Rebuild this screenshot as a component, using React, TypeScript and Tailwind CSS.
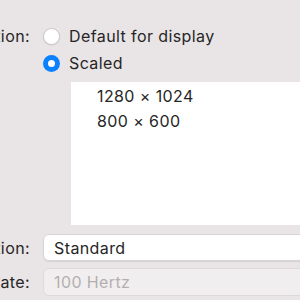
import React from "react";

function Label({ children, className = "" }: { children: React.ReactNode; className?: string }) {
  return (
    <div className={"flex justify-end items-center whitespace-nowrap " + className}>
      <span>{children}</span>
    </div>
  );
}

function Radio({ checked }: { checked: boolean }) {
  return checked ? (
    <div className="w-[17px] h-[17px] rounded-full bg-[#0a82ff] flex items-center justify-center shrink-0">
      <div className="w-[7px] h-[7px] rounded-full bg-white" />
    </div>
  ) : (
    <div className="w-[17px] h-[17px] rounded-full bg-white border border-[#cdc8c9] shadow-[0_0.5px_1px_rgba(0,0,0,0.12)] shrink-0" />
  );
}

export default function App() {
  return (
    <div
      className="w-[300px] h-[300px] overflow-hidden bg-[#e9e4e5] text-[16px] tracking-[0.4px] text-[#262626]"
      style={{ fontFamily: 'Inter, "Noto Sans", "Liberation Sans", sans-serif' }}
    >
      <div className="grid grid-cols-[30px_1fr] gap-x-[13px] pt-[26px] mr-[-30px]">
        <Label className="h-[20px]">Resolution:</Label>
        <div className="flex flex-col">
          <div className="flex items-center gap-[9px] h-[20px]">
            <Radio checked={false} />
            <span>Default for display</span>
          </div>
          <div className="flex items-center gap-[9px] h-[20px] mt-[7px]">
            <Radio checked={true} />
            <span>Scaled</span>
          </div>
          <div className="ml-[28px] mt-[9px] h-[143px] bg-white pt-[1px] pl-[26px]">
            <div className="h-[25px] flex items-center">1280 × 1024</div>
            <div className="h-[25px] flex items-center">800 × 600</div>
          </div>
        </div>

        <Label className="h-[27px] mt-[9px]">Rotation:</Label>
        <div className="mt-[9px] h-[27px] bg-white rounded-[6px] border border-[#dad5d6] shadow-[0_1px_1px_rgba(0,0,0,0.08)] flex items-center pl-[10px]">
          Standard
        </div>

        <Label className="h-[28px] mt-[7px]">Refresh rate:</Label>
        <div className="mt-[7px] h-[28px] bg-[#f1eeef] rounded-[6px] border border-[#dedadb] flex items-center pl-[10px] text-[#b3afb0]">
          100 Hertz
        </div>
      </div>
    </div>
  );
}
